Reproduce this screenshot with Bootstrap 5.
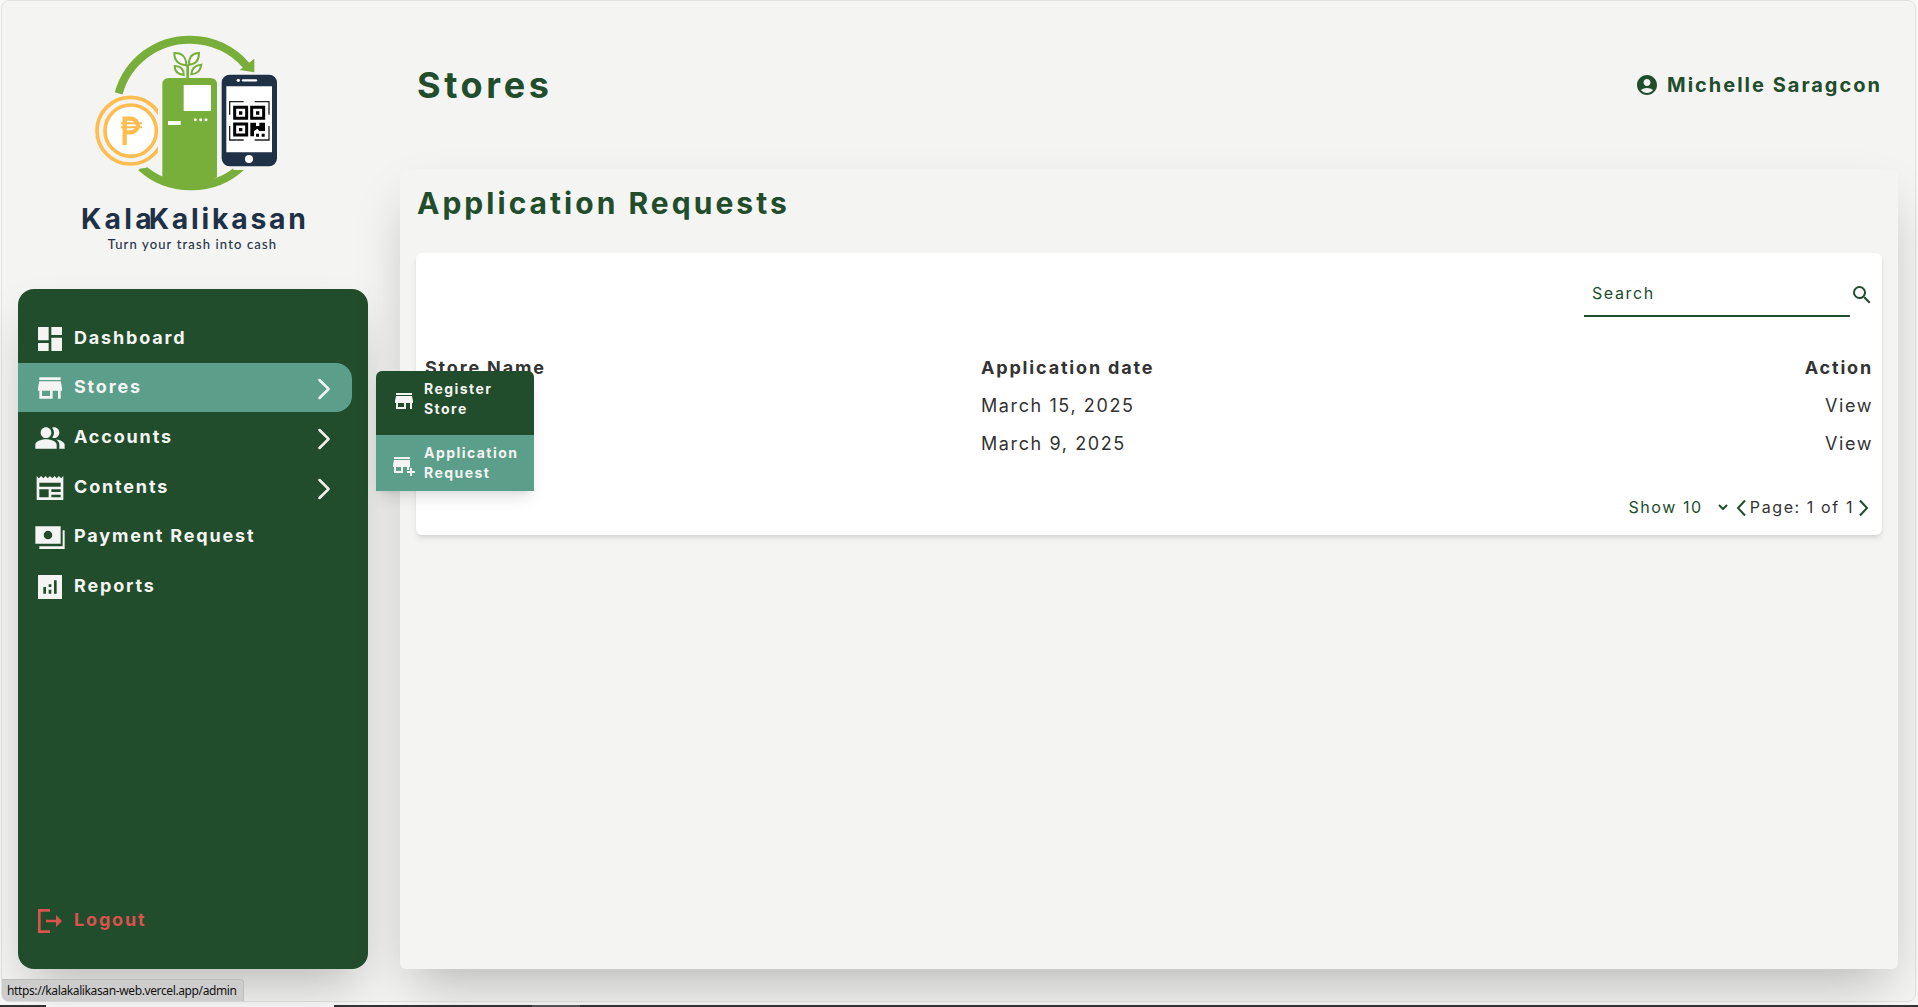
<!DOCTYPE html>
<html lang="en">
<head>
<meta charset="utf-8">
<meta name="viewport" content="width=device-width, initial-scale=1">
<title>KalaKalikasan Admin - Stores</title>
<link href="https://cdn.jsdelivr.net/npm/bootstrap@5.3.0/dist/css/bootstrap.min.css" rel="stylesheet">
<style>
  :root { --forest: #214d2c; --teal: #5b9f8b; --paper: #f4f4f2; }
  body { font-family: Inter, "Liberation Sans", sans-serif; letter-spacing: 1.6px; background: #f8f8f8; color: #333; height: 1007px; overflow: hidden; }
  svg { display: block; flex-shrink: 0; }
  .app-frame { height: 1002px; margin: 0 2px 0 1px; border: 1px solid #e2e2e1; border-radius: 8px; background: var(--paper); }
  .side-col { width: 366px; padding-left: 16px; }
  .brand-logo { margin: 19px 0 19px 42px; }
  .side-menu { width: 350px; height: 680px; padding: 24.4px 0 23.5px; background: var(--forest); border-radius: 16px; box-shadow: 0 25px 50px -12px rgba(0,0,0,.25); }
  .side-link { height: 49.65px; width: 334px; padding: 1px 16px 0; gap: 8px; color: var(--paper); font-size: 18px; font-weight: 700; letter-spacing: 1.83px; text-decoration: none; position: relative; }
  .side-link .caption-text { line-height: 24px; margin-bottom: 2px; }
  .side-link.current { height: 49px; margin-bottom: .65px; padding-top: 0; background: var(--teal); border-radius: 0 16px 16px 0; }
  .side-link.leave { color: #d9534f; }
  .side-arrow { margin-top: 2px; }
  .fly-menu { position: absolute; left: 358px; top: 8px; width: 158px; z-index: 5; border-radius: 6px 6px 0 0; background: var(--forest); box-shadow: 0 10px 15px -3px rgba(0,0,0,.1), 0 4px 6px -4px rgba(0,0,0,.1); font-size: 14px; line-height: 20px; letter-spacing: 1.45px; }
  .fly-menu a { color: var(--paper); text-decoration: none; gap: 8px; padding-left: 16px; }
  .fly-first { height: 64px; padding-bottom: 9px; }
  .fly-second { height: 56px; background: var(--teal); }
  .main-col { padding: 0 17px 0 32px; }
  .top-bar { height: 168px; padding: 0 16px 0 17px; }
  .page-title { font-size: 36px; font-weight: 700; color: var(--forest); line-height: 40px; margin: 64px 0 0; letter-spacing: 3.6px; }
  .who { font-size: 20px; font-weight: 700; color: var(--forest); line-height: 28px; margin-top: 70px; letter-spacing: 2px; }
  .panel-box { height: 800px; padding: 16px; background: var(--paper); border-radius: 6px; box-shadow: 0 25px 50px -12px rgba(0,0,0,.25); }
  .panel-title { font-size: 30px; font-weight: 700; color: var(--forest); line-height: 36px; margin: 0 0 32px 1px; letter-spacing: 3.03px; }
  .sheet { height: 282px; background: #fff; border-radius: 6px; padding: 22px 8px 0; box-shadow: 0 4px 6px -1px rgba(0,0,0,.1), 0 2px 4px -2px rgba(0,0,0,.1); }
  .find-input { width: 266px; height: 42px; border: 0; border-bottom: 2px solid var(--forest); padding: 0 8px 5px; letter-spacing: .1em; font-size: 16px; color: var(--forest); outline: 0; background: transparent; }
  .find-input::placeholder { color: var(--forest); opacity: 1; }
  .find-icon { margin-bottom: 2px; }
  .store-list { width: 1450px; table-layout: fixed; margin-top: 32px; font-size: 18px; line-height: 28px; }
  .store-list th, .store-list td { padding: 5px 1px; height: 38px; }
  .store-list th { letter-spacing: 1.83px; }
  .pager { margin-top: 32px; height: 24px; font-size: 16px; }
  .pager .per-page { color: var(--forest); margin-right: -1px; }
  .url-tip { position: absolute; left: 2px; top: 979px; width: 242px; height: 22px; background: #cdcdcd; border: 1px solid #bdbdbd; border-left: 0; border-bottom: 0; border-radius: 0 4px 0 6px; color: #111; font: 12px/22px "Noto Sans", "Open Sans", sans-serif; letter-spacing: -.38px; padding-left: 5px; white-space: nowrap; }
  .edge-strip { height: 2px; margin-top: 3px; background: linear-gradient(90deg, #333 0 46px, #fafafa 46px 334px, #333 334px 532px, #555 532px 580px, #333 580px); }
</style>
<script src="https://cdn.jsdelivr.net/npm/bootstrap@5.3.0/dist/js/bootstrap.bundle.min.js"></script>
</head>
<body>
<svg width="0" height="0" class="position-absolute">
  <symbol id="i-store" viewBox="0 0 24 24"><path d="M20 4H4v2h16V4zm1 10v-2l-1-5H4l-1 5v2h1v6h10v-6h4v6h2v-6h1zm-9 4H6v-4h6v4z"/></symbol>
  <symbol id="i-next" viewBox="0 0 16 16"><path fill-rule="evenodd" d="M4.646 1.646a.5.5 0 0 1 .708 0l6 6a.5.5 0 0 1 0 .708l-6 6a.5.5 0 0 1-.708-.708L10.293 8 4.646 2.354a.5.5 0 0 1 0-.708z"/></symbol>
</svg>
<div class="app-frame d-flex">
  <aside class="side-col flex-shrink-0">
    <svg class="brand-logo" width="260" height="250" viewBox="0 0 780 750">
      <clipPath id="coin-cut"><path d="M90 210h204v240H90z"/></clipPath>
      <g fill="none" stroke="#78ae3a" stroke-width="24">
        <path d="M176 220A220 220 0 0 1 391 59A220 220 0 0 1 561 139"/>
        <path d="M243 442A220 220 0 0 0 391 499A220 220 0 0 0 543 442"/>
      </g>
      <path fill="#f4f4f2" d="M230 425h30v18l-28 4zM520 430h40v20h-40z"/>
      <path fill="#78ae3a" d="M583 116v41l-44-7zM307 472V194q0-20 20-20h124q20 0 20 20v278q-80 56-164 0z"/>
      <path fill="#fff" d="M371 195h82v78h-82zM324 303h38v12h-38z"/>
      <g fill="#fff"><circle cx="406" cy="299" r="4.5"/><circle cx="422" cy="299" r="4.5"/><circle cx="438" cy="299" r="4.5"/></g>
      <g fill="#fff" stroke="#78ae3a" stroke-width="6"><path d="M383 176v-43" stroke-width="8"/><path d="M379 136Q342 132 343 99Q378 98 379 136zM387 134Q386 100 417 99Q417 132 387 134zM371 165Q343 160 344 138Q371 138 371 165zM394 163Q396 136 424 134Q420 162 394 163z"/></g>
      <g fill="none" stroke="#ffbd4f" stroke-width="11" clip-path="url(#coin-cut)"><circle cx="211" cy="332" r="100"/><circle cx="212" cy="332" r="77" fill="#fff"/></g>
      <path d="M194 375V296h19a20.500 20.500 0 0 1 0 41h-19" fill="none" stroke="#ffbd4f" stroke-width="13"/>
      <path d="M183 310h63M183 322h63" stroke="#ffbd4f" stroke-width="6"/>
      <rect x="485" y="164" width="166" height="275" rx="24" fill="#1e3147"/>
      <path fill="#fff" d="M499 199h137v198H499z"/>
      <circle cx="567" cy="417" r="12" fill="#fff"/><circle cx="535" cy="181" r="5" fill="#fff"/><path d="M549 181h39" stroke="#fff" stroke-width="7" stroke-linecap="round"/>
      <path d="M509 284v-39h42M584 245h43v39M627 318v42h-43M551 360h-42v-42" fill="none" stroke="#222" stroke-width="4"/>
      <g fill="none" stroke="#000" stroke-width="9"><path d="M524 262h36v33h-36zM575 262h36v33h-36zM524 312h36v33h-36z"/></g>
      <path d="M537 274h10v10h-10zM588 274h10v10h-10zM537 324h10v10h-10zM571 308h17v10h10v-10h17v25h-17l-6-7-10 7v16h-11zM588 341h9v9h-9zM605 341h9v9h-9z"/>
      <g fill="#1e3147" letter-spacing="0">
        <text x="63" y="627" font-family="Inter, sans-serif" font-size="85" font-weight="700" textLength="212">Kala</text>
        <text x="266" y="627" font-family="Inter, sans-serif" font-size="85" font-weight="700" textLength="472">Kalikasan</text>
        <text x="143" y="687" font-family="Lato, sans-serif" font-size="39" textLength="505" stroke="#1e3147" stroke-width=".4">Turn your trash into cash</text>
      </g>
    </svg>
    <nav class="side-menu d-flex flex-column">
      <a class="side-link d-flex align-items-center" href="#"><svg width="32" height="32" viewBox="0 0 24 24" fill="currentColor"><path d="M3 13h8V3H3v10zm0 8h8v-6H3v6zm10 0h8V11h-8v10zm0-18v6h8V3h-8z"/></svg><span class="caption-text">Dashboard</span></a>
      <div class="side-link current d-flex align-items-center"><svg width="32" height="32" fill="currentColor"><use href="#i-store"/></svg><span class="caption-text">Stores</span><svg class="side-arrow ms-auto" width="24" height="24" fill="currentColor" stroke="currentColor" stroke-width=".7"><use href="#i-next"/></svg>
        <div class="fly-menu">
          <a href="#" class="fly-first d-flex align-items-center"><svg class="mt-1" width="24" height="24" fill="currentColor"><use href="#i-store"/></svg><span>Register<br>Store</span></a>
          <a href="#" class="fly-second d-flex align-items-center"><svg class="mt-1" width="24" height="24" viewBox="0 0 24 24" fill="currentColor"><path fill-rule="evenodd" d="M2 4h16v2H2zM18 7H2L1 12v2h1v6h9v-6h4v3h2v-3h1v-2zM9 18H4v-4h5zM20 18v-3h-2v3h-3v2h3v3h2v-3h3v-2z"/></svg><span>Application<br>Request</span></a>
        </div>
      </div>
      <a class="side-link d-flex align-items-center" href="#"><svg width="32" height="32" viewBox="0 0 24 24" fill="currentColor"><path d="M16.670 13.130C18.040 14.060 19 15.320 19 17v3h4v-3c0-2.180-3.570-3.470-6.330-3.870zM15 12c2.210 0 4-1.790 4-4s-1.790-4-4-4c-.47 0-.91.1-1.330.24a5.980 5.980 0 0 1 0 7.520c.42.14.86.24 1.330.24zM9 12c2.210 0 4-1.790 4-4s-1.790-4-4-4-4 1.790-4 4 1.790 4 4 4zm0 1c-2.670 0-8 1.340-8 4v3h16v-3c0-2.660-5.330-4-8-4z"/></svg><span class="caption-text">Accounts</span><svg class="side-arrow ms-auto" width="24" height="24" fill="currentColor" stroke="currentColor" stroke-width=".7"><use href="#i-next"/></svg></a>
      <a class="side-link d-flex align-items-center" href="#"><svg width="32" height="32" viewBox="0 0 24 24" fill="currentColor"><path fill-rule="evenodd" d="M22 3l-1.670 1.670L18.670 3 17 4.670 15.330 3l-1.660 1.670L12 3l-1.670 1.670L8.670 3 7 4.670 5.330 3 3.670 4.670 2 3v18h20V3zM11 19H4v-6h7v6zm9 0h-7v-2h7v2zm0-4h-7v-2h7v2zm0-4H4V8h16v3z"/></svg><span class="caption-text">Contents</span><svg class="side-arrow ms-auto" width="24" height="24" fill="currentColor" stroke="currentColor" stroke-width=".7"><use href="#i-next"/></svg></a>
      <a class="side-link d-flex align-items-center" href="#"><svg width="32" height="32" viewBox="0 0 24 24" fill="currentColor"><path fill-rule="evenodd" d="M1 4h19v13H1zM10.500 7.300a3.200 3.200 0 1 0 0 6.400 3.200 3.200 0 0 0 0-6.400zM21.500 7H23v14H4v-2h17.500z"/></svg><span class="caption-text">Payment Request</span></a>
      <a class="side-link d-flex align-items-center" href="#"><svg width="32" height="32" viewBox="0 0 24 24" fill="currentColor"><path fill-rule="evenodd" d="M3 3h18v18H3zM7 12v5h2v-5zM11 14v3h2v-3zM11 10v2h2v-2zM15 7v10h2V7z"/></svg><span class="caption-text">Reports</span></a>
      <a class="side-link leave d-flex align-items-center mt-auto" href="#"><svg width="32" height="32" viewBox="0 0 24 24" fill="currentColor"><path d="M3 3h9v2H5v14h7v2H3zM16.500 7.500L21 12l-4.500 4.500V13H9v-2h7.500z"/></svg><span class="caption-text">Logout</span></a>
    </nav>
  </aside>
  <main class="main-col flex-grow-1">
    <header class="top-bar d-flex justify-content-between align-items-start">
      <h1 class="page-title">Stores</h1>
      <div class="who d-flex align-items-center gap-2"><svg width="24" height="24" viewBox="0 0 24 24" fill="currentColor"><path d="M12 2C6.480 2 2 6.480 2 12s4.480 10 10 10 10-4.480 10-10S17.520 2 12 2zm0 4c1.930 0 3.500 1.570 3.500 3.500S13.930 13 12 13s-3.500-1.570-3.500-3.500S10.070 6 12 6zm0 14c-2.030 0-4.430-.82-6.140-2.880C7.550 15.800 9.680 15 12 15s4.450.8 6.140 2.120C16.430 19.180 14.030 20 12 20z"/></svg><span>Michelle Saragcon</span></div>
    </header>
    <section class="panel-box">
      <h2 class="panel-title">Application Requests</h2>
      <div class="sheet">
        <div class="d-flex justify-content-end align-items-center">
          <input class="find-input" type="text" placeholder="Search">
          <svg class="find-icon" width="24" height="24" viewBox="0 0 24 24" fill="#214d2c"><path d="M15.500 14h-.79l-.28-.27A6.471 6.471 0 0 0 16 9.500 6.500 6.500 0 1 0 9.500 16c1.610 0 3.090-.59 4.230-1.570l.27.28v.79l5 4.990L20.490 19l-4.990-5zm-6 0C7.010 14 5 11.990 5 9.500S7.010 5 9.500 5 14 7.010 14 9.500 11.990 14 9.500 14z"/></svg>
        </div>
        <table class="store-list">
          <colgroup><col style="width:556px"><col style="width:560px"><col></colgroup>
          <thead><tr><th>Store Name</th><th>Application date</th><th class="text-end">Action</th></tr></thead>
          <tbody>
            <tr><td></td><td>March 15, 2025</td><td class="text-end">View</td></tr>
            <tr><td></td><td>March 9, 2025</td><td class="text-end">View</td></tr>
          </tbody>
        </table>
        <div class="pager d-flex justify-content-end align-items-center">
          <span class="per-page">Show 10</span>
          <svg class="ms-3" width="10" height="6" viewBox="0 0 10 6" fill="none" stroke="#214d2c" stroke-width="2"><path d="M1 1l4 4 4-4"/></svg>
          <svg class="ms-1" width="18" height="20" viewBox="0 0 18 20" fill="none" stroke="#214d2c" stroke-width="2"><path d="M13 3.500L6 11l7 7.500"/></svg>
          <span>Page: 1 of 1</span>
          <svg width="20" height="20" viewBox="0 0 20 20" fill="none" stroke="#214d2c" stroke-width="2"><path d="M6 3.500L13 11l-7 7.500"/></svg>
        </div>
      </div>
    </section>
  </main>
</div>
<div class="edge-strip"></div>
<div class="url-tip">https://kalakalikasan-web.vercel.app/admin</div>
</body>
</html>
